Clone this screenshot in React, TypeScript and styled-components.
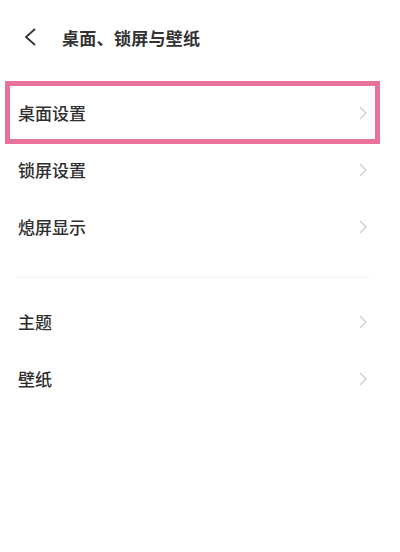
import styled, { createGlobalStyle } from "styled-components";

const items = [
    { id: "desktop", label: "桌面设置", highlighted: true },
    { id: "lock", label: "锁屏设置" },
    { id: "aod", label: "熄屏显示" },
];

const moreItems = [
    { id: "theme", label: "主题" },
    { id: "wallpaper", label: "壁纸" },
];

function Chevron() {
    return (
        <ArrowSvg width="8" height="14" viewBox="0 0 8 14">
            <path d="M1 1 L7 7 L1 13" fill="none" stroke="#d2d2d2" strokeWidth="1.5" />
        </ArrowSvg>
    );
}

function App() {
    return (
        <Page>
            <GlobalStyle />
            <Header>
                <BackBtn>
                    <svg width="12" height="18" viewBox="0 0 12 18">
                        <path d="M11 1 L2 9 L11 17" fill="none" stroke="#333" strokeWidth="1.8" />
                    </svg>
                </BackBtn>
                <Title>桌面、锁屏与壁纸</Title>
            </Header>

            <List>
                {items.map((item) => (
                    <Row key={item.id} $highlighted={item.highlighted}>
                        <Label>{item.label}</Label>
                        <Chevron />
                    </Row>
                ))}
            </List>

            <Divider />

            <List>
                {moreItems.map((item) => (
                    <Row key={item.id}>
                        <Label>{item.label}</Label>
                        <Chevron />
                    </Row>
                ))}
            </List>
        </Page>
    );
}

// STYLING
const GlobalStyle = createGlobalStyle`
    html, body {
        margin: 0;
        padding: 0;
        background: #ffffff;
    }
    body {
        font-family: "Noto Sans CJK SC", "Noto Sans", sans-serif;
    }
`;

const Page = styled.div`
    width: 400px;
    height: 552px;
    background: #ffffff;
    display: flex;
    flex-direction: column;
`;

const Header = styled.div`
    height: 74px;
    display: flex;
    align-items: center;
    padding-left: 24px;
    gap: 26px;
    margin-bottom: 10px;
`;

const BackBtn = styled.div`
    display: flex;
    align-items: center;
`;

const Title = styled.div`
    font-size: 17px;
    font-weight: 700;
    color: #333333;
    letter-spacing: 0.3px;
`;

const List = styled.div`
    display: flex;
    flex-direction: column;
`;

const Row = styled.div<{ $highlighted?: boolean }>`
    position: relative;
    height: 57px;
    display: flex;
    align-items: center;
    justify-content: space-between;
    padding: 0 33px 0 18px;

    ${({ $highlighted }) =>
        $highlighted &&
        `
        &::after {
            content: "";
            position: absolute;
            top: -3px;
            bottom: -3px;
            left: 5px;
            right: 20px;
            border: 5px solid #e8729b;
        }
    `}
`;

const Label = styled.span`
    font-size: 17px;
    font-weight: 500;
    color: #2f2f2f;
`;

const ArrowSvg = styled.svg`
    display: block;
`;

const Divider = styled.div`
    height: 1px;
    background: #f3f3f3;
    margin: 22px 30px 15px 16px;
`;

export default App;
